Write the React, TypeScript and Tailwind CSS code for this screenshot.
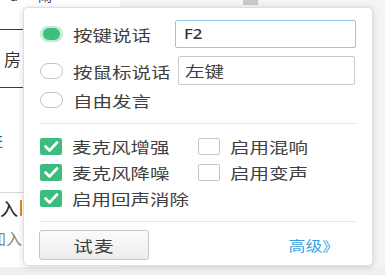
import React from "react";

const cjk = "font-['Noto_Sans_CJK_SC','Noto_Sans',sans-serif]";

function Radio({ checked }: { checked?: boolean }) {
  if (checked) {
    return (
      <div className="flex h-[16px] w-[23px] shrink-0 items-center justify-center rounded-full bg-[#c3ecd6]">
        <div className="h-[12px] w-[17px] rounded-full bg-[#3dbf7e]" />
      </div>
    );
  }
  return <div className="h-[16px] w-[23px] shrink-0 rounded-full border-[1.5px] border-[#c4c4c4] bg-white" />;
}

function Check({ checked }: { checked?: boolean }) {
  if (checked) {
    return (
      <div className="h-[17px] w-[22px] shrink-0 rounded-[2px] bg-[#3dbd7d]">
        <svg width="22" height="17" viewBox="0 0 22 17">
          <path d="M5.5 8.5 L9.5 12.5 L17 4.5" fill="none" stroke="#ffffff" strokeWidth="2.6" strokeLinecap="round" strokeLinejoin="round" />
        </svg>
      </div>
    );
  }
  return <div className="h-[17px] w-[22px] shrink-0 rounded-[2px] border border-[#c6c6c6] bg-white" />;
}

function Label({ children, className = "" }: { children: React.ReactNode; className?: string }) {
  return (
    <span
      className={`inline-block origin-left scale-x-[1.3] whitespace-nowrap text-[15px] leading-none text-[#404040] ${className}`}
    >
      {children}
    </span>
  );
}

function CheckRow({ checked, label }: { checked?: boolean; label: string }) {
  return (
    <div className="flex items-center">
      <Check checked={checked} />
      <Label className="ml-[10px]">{label}</Label>
    </div>
  );
}

export default function App() {
  return (
    <div className={`relative h-[275px] w-[385px] overflow-hidden bg-[#f4f4f4] ${cjk}`}>
      {/* background application */}
      <div className="flex h-full flex-col">
        <div className="flex flex-1">
          <div className="flex w-[120px] flex-col bg-white text-[#333]">
            <div className="h-[30px] overflow-hidden border-b-[1.5px] border-[#3a3a3a]">
              <div className="-mt-[15px] flex gap-[20px] pl-[10px] text-[14px] text-[#444]">
                <span>a</span>
                <span>闹</span>
              </div>
            </div>
            <div className="flex h-[58px] items-center border-b-[1.5px] border-[#3a3a3a] pl-[4px] text-[17px]">房</div>
            <div className="flex h-[105px] items-center overflow-hidden border-b border-[#d8d8d8]">
              <span className="-ml-[13px] text-[16px] text-[#3a5c9c]">进</span>
            </div>
            <div className="flex h-[30px] items-center">
              <span className="text-[18px] leading-none text-[#222]">入</span>
              <span className="ml-[2px] h-[16px] w-[2px] bg-[#e08a2a]" />
            </div>
            <div className="flex h-[30px] items-center overflow-hidden">
              <span className="-ml-[10px] text-[16px] leading-none text-[#888]">加入</span>
            </div>
          </div>
          <div className="flex flex-1 justify-start">
            <div className="ml-[123px] h-[5px] w-[15px] bg-[#c8c8c8]" />
          </div>
        </div>
        <div className="h-[8px] bg-[#eef1ea]" />
      </div>

      {/* popup */}
      <div className="absolute left-[23px] top-[7px] flex h-[259px] w-[350px] flex-col rounded-[5px] border border-[#dedede] bg-white px-[16px] pt-[12px] shadow-[0_1px_6px_rgba(0,0,0,0.15)]">
        <div className="flex h-[28px] items-center">
          <Radio checked />
          <div className="ml-[10px] w-[102px] shrink-0">
            <Label>按键说话</Label>
          </div>
          <div className="flex h-[28px] w-[183px] items-center rounded-[2px] border border-[#90c5ea] pl-[8px]">
            <span className="inline-block origin-left scale-x-[1.2] font-['Noto_Sans',sans-serif] text-[14px] font-medium leading-none text-[#333]">
              F2
            </span>
          </div>
        </div>
        <div className="mt-[8px] flex h-[29px] items-center">
          <Radio />
          <div className="ml-[10px] w-[105px] shrink-0">
            <Label>按鼠标说话</Label>
          </div>
          <div className="flex h-[29px] w-[177px] items-center rounded-[2px] border border-[#cacaca] pl-[6px]">
            <Label className="text-[#333]">左键</Label>
          </div>
        </div>
        <div className="mt-[3px] flex h-[24px] items-center">
          <Radio />
          <Label className="ml-[10px]">自由发言</Label>
        </div>

        <div className="mt-[11px] h-px bg-[#e6e6e6]" />

        <div className="mt-[9px] grid grid-cols-[158px_1fr] grid-rows-[26px_26px_27px]">
          <CheckRow checked label="麦克风增强" />
          <CheckRow label="启用混响" />
          <CheckRow checked label="麦克风降噪" />
          <CheckRow label="启用变声" />
          <CheckRow checked label="启用回声消除" />
        </div>

        <div className="mt-[9px] h-px bg-[#e6e6e6]" />

        <div className="mt-[8px] flex items-center justify-between">
          <button className="-ml-[1px] flex h-[30px] w-[110px] items-center justify-center rounded-[3px] border border-[#c6c6c6] bg-gradient-to-b from-[#fbfbfb] to-[#ececec]">
            <span className="inline-block scale-x-[1.3] text-[15px] leading-none tracking-[1px] text-[#3c3c3c]">试麦</span>
          </button>
          <span className="mr-[17px] inline-block origin-right scale-x-[1.2] text-[14px] leading-none text-[#3a9fe0]">高级》</span>
        </div>
      </div>
    </div>
  );
}
